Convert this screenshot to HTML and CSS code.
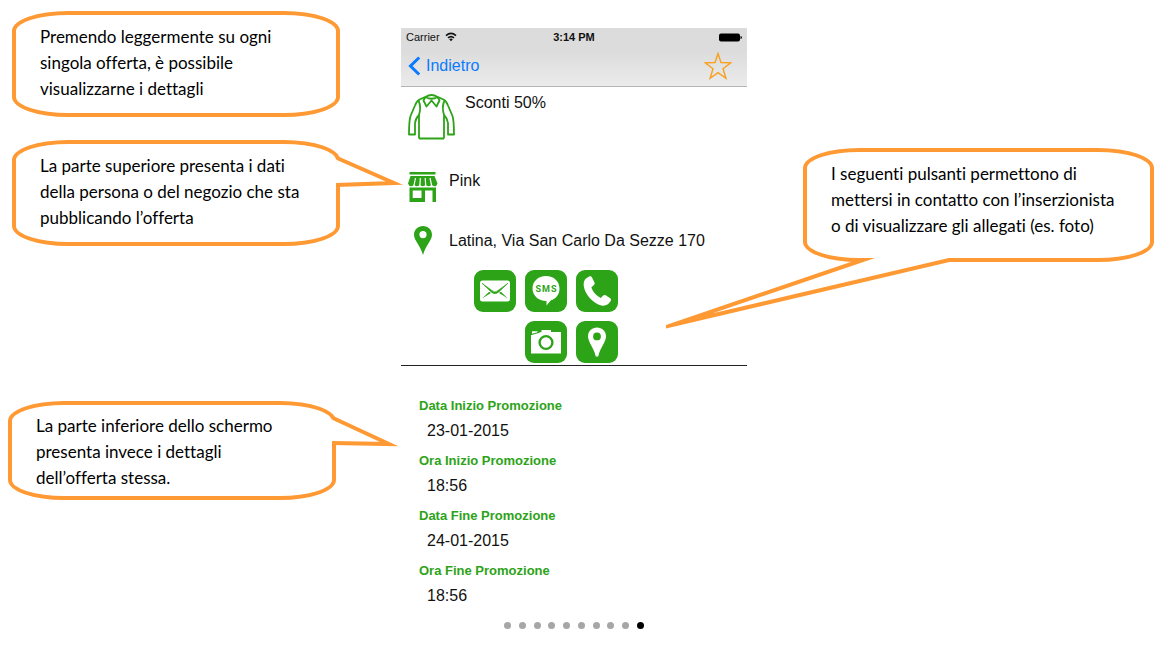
FILE: index.html
```html
<!DOCTYPE html>
<html lang="it">
<head>
  <meta charset="UTF-8" />
  <meta name="viewport" content="width=device-width, initial-scale=1.0"/>
  <title>Dettagli offerta</title>
  <link rel="stylesheet" href="styles.css">
</head>
<body>
  <main class="guide">

    <div class="notes-left">
      <div class="notes-top">
        <p class="callout">Premendo leggermente su ogni<br>singola offerta, è possibile<br>visualizzarne i dettagli</p>
        <p class="callout">La parte superiore presenta i dati<br>della persona o del negozio che sta<br>pubblicando l’offerta
          <svg class="tail tail-side" width="70" height="40" aria-hidden="true">
            <path class="tail-fill" d="M0 5H4L58 29L4 31H0Z"/>
            <path class="tail-line" d="M1 4L58 29L0 31"/>
          </svg>
        </p>
      </div>
      <p class="callout callout-short">La parte inferiore dello schermo<br>presenta invece i dettagli<br>dell’offerta stessa.
        <svg class="tail tail-side" width="70" height="40" aria-hidden="true">
          <path class="tail-fill" d="M0 4H4L57 29L4 28H0Z"/>
          <path class="tail-line" d="M1 3L57 29L0 28"/>
        </svg>
      </p>
    </div>

    <section class="phone">
      <header class="topbar">
        <div class="status">
          <span class="carrier">Carrier
            <svg width="12" height="10" viewBox="0 0 12 10" aria-hidden="true">
              <path d="M1 3.6Q6 -.9 11 3.6M3 5.9Q6 3.2 9 5.9" fill="none" stroke="#111" stroke-width="1.6"/>
              <path d="M4.2 7.2Q6 5.8 7.8 7.2L6 9.2Z" fill="#111"/>
            </svg>
          </span>
          <strong>3:14 PM</strong>
          <svg class="battery" width="23" height="9" viewBox="0 0 23 9" aria-hidden="true">
            <rect x="0" y="0.5" width="21" height="8" rx="2"/>
            <path d="M21.5 3Q23 3.2 23 4.5T21.5 6Z"/>
          </svg>
        </div>
        <nav class="navbar">
          <a class="back" href="#">
            <svg width="13" height="20" viewBox="0 0 13 20" aria-hidden="true">
              <path d="M11.2 1.5L2.5 10L11.2 18.5" fill="none" stroke="#0a7aff" stroke-width="3"/>
            </svg>
            Indietro
          </a>
          <button class="star" type="button" aria-label="Preferiti">
            <svg width="28" height="28" viewBox="0 0 28 28" aria-hidden="true">
              <path d="M14 1.5L17 10.5L26.8 10.8L19 16.8L21.9 26.2L14 20.6L6.1 26.2L9 16.8L1.2 10.8L11 10.5Z" fill="none" stroke="#f7a01e" stroke-width="1.4"/>
            </svg>
          </button>
        </nav>
      </header>

      <div class="info">
        <div class="row row-offer">
          <svg width="47" height="46" viewBox="0 0 47 46" aria-hidden="true">
            <g fill="none" stroke="#2da318" stroke-width="1.8" stroke-linejoin="round">
              <path d="M17 3.2L11.5 5.5Q8.5 7 7 11.5L2.5 22Q1 27 1 40.5H7V29Q7.5 24.500 11 21"/>
              <path d="M30 3.2L35.500 5.500Q38.500 7 40 11.500L44.500 22Q46 27 46 40.500H40V29Q39.500 24.500 36 21"/>
              <path d="M11 44.500V21Q13.500 13 10.500 6.500M36 44.500V21Q33.500 13 36.500 6.500M11 44.500H36"/>
              <path d="M17.500 3Q23.500 -1 29.500 3Q23.500 6.500 17.500 3Z"/>
              <path d="M17.500 3L15.500 6.500L18.500 12.500L23.500 6.500L28.500 12.500L31.500 6.500L29.500 3"/>
            </g>
          </svg>
          <span>Sconti 50%</span>
        </div>
        <div class="row row-shop">
          <svg width="30" height="30" viewBox="0 0 30 30" aria-hidden="true">
            <g fill="#2da318">
              <path d="M1.500 0H27.500V2.500H1.500Z"/>
              <path d="M2.500 4H26.500L29.500 11.500Q28.800 14.300 26.700 14.300T23.600 12.500Q22.800 14.300 20.600 14.300T17.700 12.500Q16.900 14.300 14.800 14.300T11.900 12.500Q11 14.300 8.900 14.300T6 12.500Q5.300 14.300 3.100 14.300T0 11.500Z"/>
              <path fill-rule="evenodd" d="M1.500 15.500H28V30H24.500V18.500H17V30H1.500ZM4.700 18.500V26H13.500V18.500Z"/>
            </g>
            <path d="M7.500 6L6 13.500M12.300 6L11.900 13.500M17.200 6L17.700 13.500M22 6L23.600 13.500" stroke="#fff" stroke-width="1.200"/>
          </svg>
          <span>Pink</span>
        </div>
        <div class="row row-place">
          <svg width="30" height="31" viewBox="0 0 30 31" aria-hidden="true">
            <path fill="#2da318" fill-rule="evenodd" d="M15 1C20 1 24 4.800 24 9.800C24 15.500 17.800 20 15 30C12.200 20 6 15.500 6 9.800C6 4.800 10 1 15 1ZM15 6A3.600 3.600 0 1 0 15 13.200A3.600 3.600 0 1 0 15 6Z"/>
          </svg>
          <span>Latina, Via San Carlo Da Sezze 170</span>
        </div>

        <div class="actions">
          <div class="actions-row">
            <button type="button" aria-label="Email">
              <svg viewBox="0 0 42 42" aria-hidden="true">
                <rect x="6" y="10.500" width="30" height="21" rx="2.500" fill="#fff"/>
                <path d="M8 13.200L18 20.500Q21 23.500 24 20.500L34 13.200L24.500 22.200Q21 25.200 17.500 22.200Z" fill="#2da318" stroke="#2da318" stroke-width=".6"/>
                <path d="M8 28.500L15.200 21.800L17 23ZM34 28.500L26.800 21.800L25 23Z" fill="#2da318"/>
              </svg>
            </button>
            <button type="button" aria-label="SMS">
              <svg viewBox="0 0 42 42" aria-hidden="true">
                <path d="M21 6C29 6 34.500 11.500 34.500 18.500C34.500 25 30.500 29 26 30.300L21.500 35.500V31C13.500 31 7.500 25.500 7.500 18.500C7.500 11.500 13 6 21 6Z" fill="#fff"/>
                <text class="sms" y="22"><tspan x="10.500">S</tspan><tspan x="17">M</tspan><tspan x="26">S</tspan></text>
              </svg>
            </button>
            <button type="button" aria-label="Telefono">
              <svg viewBox="0 0 42 42" aria-hidden="true">
                <path d="M10 8.500L13.500 6.300Q15 5.800 15.900 7.200L18.600 12.800Q19 14.200 17.700 15.300L15.400 17.300C16.500 21.500 20.500 26 24.700 28L27.200 25.500Q28.300 24.500 29.700 25.200L34.300 28.300Q35.600 29.500 34.700 31C32.500 34.500 29.500 36.300 25.500 35.500C17 33.500 8.500 24 7.700 15.500C7.500 12.500 8.200 10 10 8.500Z" fill="#fff"/>
              </svg>
            </button>
          </div>
          <div class="actions-row">
            <button type="button" aria-label="Foto">
              <svg viewBox="0 0 42 42" aria-hidden="true">
                <path d="M6 14.300L13.500 12L16 11H16.500V9H26V11H36V32.500H6Z" fill="#fff"/>
                <path d="M7 10.300H13L11.800 11.600L7 12.800Z" fill="#fff"/>
                <circle cx="21" cy="21.500" r="6.400" fill="none" stroke="#2da318" stroke-width="2.400"/>
              </svg>
            </button>
            <button type="button" aria-label="Mappa">
              <svg viewBox="0 0 42 42" aria-hidden="true">
                <path fill="#fff" fill-rule="evenodd" d="M21 6.500C26 6.500 30 10.300 30 15.300C30 21 24.500 26 22.200 35.500H19.800C17.500 26 12 21 12 15.300C12 10.300 16 6.500 21 6.500ZM21 11.500A3.900 3.900 0 1 0 21 19.300A3.900 3.900 0 1 0 21 11.500Z"/>
              </svg>
            </button>
          </div>
        </div>
      </div>

      <dl class="details">
        <dt>Data Inizio Promozione</dt>
        <dd>23-01-2015</dd>
        <dt>Ora Inizio Promozione</dt>
        <dd>18:56</dd>
        <dt>Data Fine Promozione</dt>
        <dd>24-01-2015</dd>
        <dt>Ora Fine Promozione</dt>
        <dd>18:56</dd>
      </dl>

      <div class="dots">
        <span></span><span></span><span></span><span></span><span></span>
        <span></span><span></span><span></span><span></span><span class="active"></span>
      </div>
    </section>

    <div class="notes-right">
      <p class="callout callout-tall">I seguenti pulsanti permettono di<br>mettersi in contatto con l’inserzionista<br>o di visualizzare gli allegati (es. foto)
        <svg class="tail tail-below" width="290" height="75" aria-hidden="true">
          <path class="tail-fill" d="M195 0V2L6 67L283 2V0Z"/>
          <path class="tail-line" d="M180 0Q188 2 197 2L6 67L283 2H290"/>
        </svg>
      </p>
    </div>

  </main>
</body>
</html>
```
FILE: styles.css
```css
* {
  box-sizing: border-box;
  margin: 0;
  padding: 0;
}

body {
  font-family: "Liberation Sans", Arial, sans-serif;
  font-size: 16px;
  line-height: 18px;
  color: #111;
  background: #fff;
}

.guide {
  display: grid;
  grid-template-columns: 401fr 346fr 413fr;
}

/* callouts */
.notes-left {
  padding: 11px 65px 0 8px;
}

.notes-top {
  display: flex;
  flex-direction: column;
  gap: 23px;
  margin-right: -4px;
  padding-left: 4px;
  margin-bottom: 155px;
}

.notes-right {
  padding: 148px 6px 0 56px;
}

.callout {
  position: relative;
  padding: 9px 0 11px 24px;
  border: 4px solid #ff9933;
  border-radius: 56px / 20px;
  font-family: Lato, "Open Sans", sans-serif;
  font-size: 17px;
  font-variant-ligatures: none;
  line-height: 26px;
  white-space: nowrap;
  color: #000;
}

.callout-short {
  padding: 8px 0 5px 24px;
}

.callout-tall {
  padding-bottom: 19px;
}

.tail {
  position: absolute;
  overflow: hidden;
}

.tail-side {
  left: 100%;
  top: 10px;
}

.tail-below {
  left: -141px;
  top: 100%;
}

.tail-fill {
  fill: #fff;
}

.tail-line {
  fill: none;
  stroke: #ff9933;
  stroke-width: 4;
  stroke-miterlimit: 30;
}

/* phone screen */
.phone {
  padding-top: 28px;
}

.topbar {
  background: linear-gradient(#dcdcdc 40%, #ebebeb);
  border-bottom: 1px solid #b4b4b4;
}

.status {
  display: grid;
  grid-template-columns: 1fr auto 1fr;
  align-items: center;
  padding: 0 5px;
  font-size: 11px;
}

.carrier svg {
  margin-left: 2px;
  vertical-align: -1px;
}

.battery {
  justify-self: end;
}

.navbar {
  display: flex;
  justify-content: space-between;
  align-items: center;
  height: 40px;
  padding: 0 15px 0 7px;
}

.back {
  display: flex;
  align-items: center;
  gap: 5px;
  color: #0a7aff;
  text-decoration: none;
}

.star {
  display: flex;
  border: none;
  background: none;
  cursor: pointer;
}

.info {
  padding: 7px 0 2px 7px;
  border-bottom: 1px solid #222;
}

.row {
  display: flex;
  gap: 11px;
}

.row-offer {
  gap: 10px;
  margin-bottom: 32px;
}

.row-shop {
  margin-bottom: 23px;
}

.row-place {
  align-items: center;
  margin-bottom: 14px;
}

.actions {
  display: flex;
  flex-direction: column;
  gap: 9px;
  padding-right: 129px;
}

.actions-row {
  display: flex;
  justify-content: flex-end;
  gap: 9px;
}

.actions button {
  width: 42px;
  height: 42px;
  border: none;
  border-radius: 9px;
  background: #2da318;
  cursor: pointer;
}

.actions svg {
  display: block;
}

.sms {
  font-family: Roboto, sans-serif;
  font-size: 9px;
  font-weight: bold;
  fill: #2da318;
}

.details {
  padding: 30px 18px 0;
}

.details dt {
  font-size: 13px;
  font-weight: bold;
  line-height: 20px;
  color: #2da318;
}

.details dd {
  margin-bottom: 5px;
  padding-left: 8px;
  line-height: 30px;
}

.dots {
  display: flex;
  justify-content: space-between;
  width: 140px;
  margin: 11px auto 0;
}

.dots span {
  width: 7px;
  height: 7px;
  border-radius: 50%;
  background: #a6a6a6;
}

.dots .active {
  background: #000;
}
```
